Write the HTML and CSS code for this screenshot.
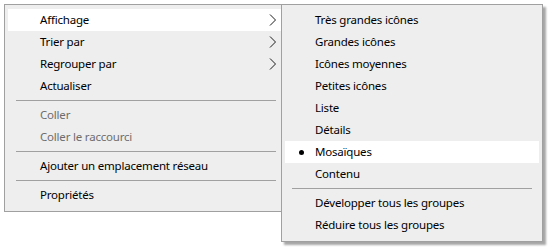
FILE: index.html
```html
<!DOCTYPE html>
<html>
<head>
<title>Menu contextuel</title>
<meta charset="UTF-8">
<link rel="stylesheet" href="styles.css">
</head>
<body>

<!-- menu principal -->
<div class="menu main">
    <div class="item hover">Affichage <svg class="arrow" width="8" height="12" viewBox="0 0 8 12"><polyline points="1,0.5 6.5,6 1,11.5" /></svg></div>
    <div class="item">Trier par <svg class="arrow" width="8" height="12" viewBox="0 0 8 12"><polyline points="1,0.5 6.5,6 1,11.5" /></svg></div>
    <div class="item">Regrouper par <svg class="arrow" width="8" height="12" viewBox="0 0 8 12"><polyline points="1,0.5 6.5,6 1,11.5" /></svg></div>
    <div class="item">Actualiser</div>
    <div class="sep"></div>
    <div class="item disabled">Coller</div>
    <div class="item disabled">Coller le raccourci</div>
    <div class="sep"></div>
    <div class="item">Ajouter un emplacement réseau</div>
    <div class="sep"></div>
    <div class="item">Propriétés</div>
</div>

<!-- sous-menu Affichage -->
<div class="menu sub">
    <div class="item">Très grandes icônes</div>
    <div class="item">Grandes icônes</div>
    <div class="item">Icônes moyennes</div>
    <div class="item">Petites icônes</div>
    <div class="item">Liste</div>
    <div class="item">Détails</div>
    <div class="item hover checked">Mosaïques</div>
    <div class="item">Contenu</div>
    <div class="sep"></div>
    <div class="item">Développer tous les groupes</div>
    <div class="item">Réduire tous les groupes</div>
</div>

</body>
</html>
```

FILE: styles.css
```css
body {
    margin: 4px;
    background: #ffffff;
    font-family: "Noto Sans", "Open Sans", sans-serif;
    font-size: 11.5px;
    letter-spacing: -0.2px;
    color: #000000;
}

/* menu */
.menu {
    background: #eeeeee;
    border: 1px solid #a0a0a0;
    padding: 4px 2px;
    box-shadow: 3px 3px 2px rgba(0, 0, 0, 0.35);
    box-sizing: border-box;
}

.main {
    width: 283px;
    height: 208px;
}

.sub {
    position: absolute;
    left: 281px;
    top: 4px;
    width: 262px;
    height: 238px;
}

/* ligne */
.item {
    position: relative;
    height: 22px;
    line-height: 22px;
    margin: 0 1px;
    padding-left: 32px;
    white-space: nowrap;
}

.sub .item {
    padding-left: 30px;
}

.item.hover {
    background: #ffffff;
}

.item.disabled {
    color: #6d6d6d;
}

/* puce */
.item.checked::before {
    content: "";
    position: absolute;
    left: 14px;
    top: 9px;
    width: 5px;
    height: 5px;
    border-radius: 50%;
    background: #000000;
}

/* flèche */
.arrow {
    position: absolute;
    left: 261px;
    top: 5px;
}

.arrow polyline {
    fill: none;
    stroke: #1a1a1a;
    stroke-width: 1;
}

/* séparateur */
.sep {
    height: 1px;
    margin: 3px 8px 3px 9px;
    background: #a0a0a0;
}

.sub .sep {
    margin: 3px 8px 3px 8px;
}
```
